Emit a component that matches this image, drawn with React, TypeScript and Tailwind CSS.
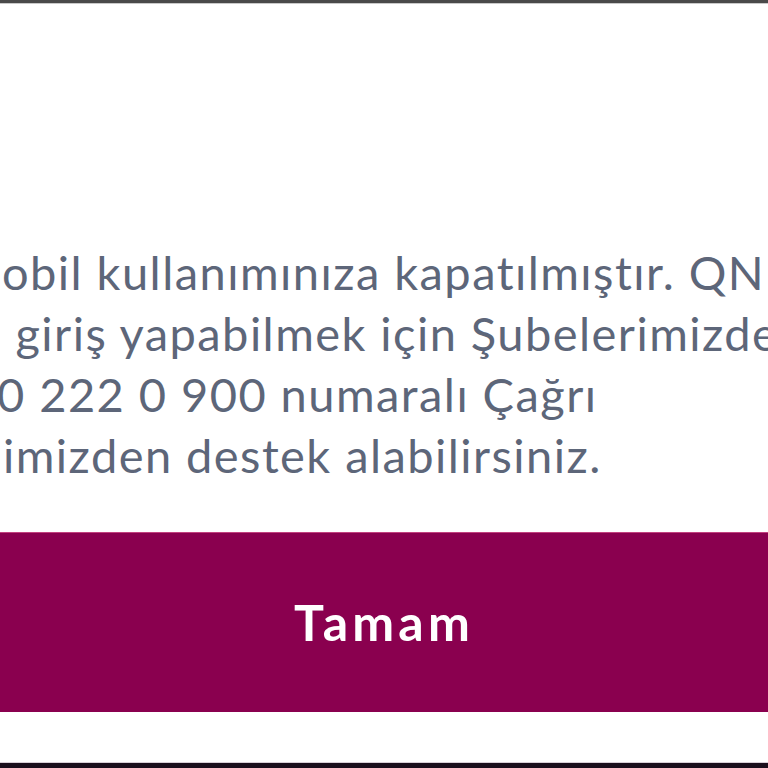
import React from 'react';

const lines = [
  { text: 'obil kullanımınıza kapatılmıştır. QNB', offset: 'ml-[2px]' },
  { text: ' giriş yapabilmek için Şubelerimizden', offset: 'ml-[2px]' },
  { text: '0 222 0 900 numaralı Çağrı', offset: '-ml-[3px]' },
  { text: 'imizden destek alabilirsiniz.', offset: 'ml-[3px]' },
];

const App = () => {
  return (
    <div className="w-[768px] h-[768px] flex flex-col bg-white overflow-hidden font-['Lato','Noto_Sans',sans-serif]">
      <div className="h-[3px] bg-[#4a4a4a] shrink-0" />
      <div className="h-px bg-[#c9c9c9] shrink-0" />

      <div className="flex-1 flex flex-col">
        <div className="pt-[238px] overflow-hidden">
          {lines.map((line, i) => (
            <div
              key={i}
              className={`whitespace-pre text-[47px] leading-[61px] tracking-[1.45px] text-[#5d6679] ${line.offset}`}
            >
              {line.text}
            </div>
          ))}
        </div>

        <button className="mt-[46px] h-[180px] w-full bg-[#8a004f] border-t border-[#c2407f] flex items-center justify-center text-white text-[50px] font-bold tracking-[4.2px]">
          Tamam
        </button>
      </div>

      <div className="h-px bg-[#d8d0d8] shrink-0" />
      <div className="h-[5px] bg-[#1a0f1c] shrink-0" />
    </div>
  );
};

export default App;
